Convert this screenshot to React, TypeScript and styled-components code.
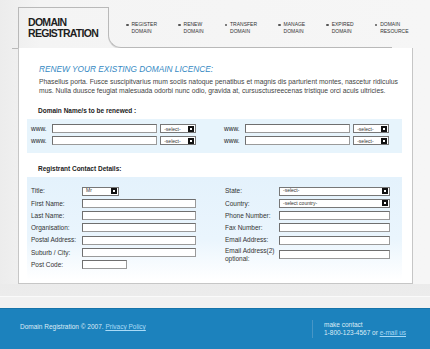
import React from "react";
import styled, { createGlobalStyle } from "styled-components";

const GlobalStyle = createGlobalStyle`
  * { box-sizing: border-box; }
  body {
    margin: 0;
    font-family: "Liberation Sans", Arial, sans-serif;
    color: #333;
  }
`;

const Page = styled.div`
  width: 430px;
  height: 349px;
  overflow: hidden;
  background: linear-gradient(to right, #ececec 0, #f4f4f4 40px, #f6f6f6 100%);
  display: flex;
  flex-direction: column;
`;

const Header = styled.header`
  display: flex;
  flex: none;
  height: 48px;
  padding: 7px 0 0 18px;
`;

const Brand = styled.div`
  width: 90px;
  border-top: 1px solid #b9b9b9;
  border-left: 1px solid #b9b9b9;
  padding: 9px 0 0 9px;
  font-size: 10.5px;
  line-height: 10.5px;
  font-weight: bold;
  letter-spacing: -0.7px;
  color: #1e1e1e;
`;

const Nav = styled.ul`
  list-style: none;
  margin: 0;
  width: 284px;
  border-left: 1px solid #b9b9b9;
  border-bottom: 1px solid #b9b9b9;
  border-bottom-left-radius: 13px;
  box-shadow: 0 1px 0 #dcdcdc;
  display: flex;
  gap: 21px;
  padding: 14px 0 0 17px;
`;

const NavItem = styled.li`
  display: flex;
  gap: 3px;
  font-size: 5px;
  line-height: 7px;
  color: #333;
  &::before {
    content: "";
    width: 2.5px;
    height: 2.5px;
    margin-top: 2.5px;
    border-radius: 50%;
    background: #555;
    flex: none;
  }
`;

const Panel = styled.main`
  position: relative;
  flex: none;
  margin-left: 18px;
  width: 395px;
  height: 236px;
  background: #fff;
  border: 1px solid #c6c6c6;
  border-top: none;
  padding-top: 16px;
  &::before {
    content: "";
    position: absolute;
    left: -7px;
    top: 0;
    width: 6px;
    height: 1px;
    background: #b9b9b9;
  }
`;

const Heading = styled.h1`
  margin: 0 0 0 20px;
  font-size: 8.3px;
  line-height: 10px;
  font-style: italic;
  font-weight: normal;
  color: #3589c3;
`;

const Intro = styled.p`
  margin: 3px 10px 0 20px;
  font-size: 6.8px;
  line-height: 9px;
  color: #444;
`;

const SectionTitle = styled.h2<{ $top: number }>`
  margin: ${(p) => p.$top}px 0 0 19px;
  font-size: 6.5px;
  line-height: 9px;
  font-weight: bold;
  color: #222;
`;

const BluePanel = styled.div<{ $fade?: boolean }>`
  margin: 4px 0 0 8px;
  width: 375px;
  background: ${(p) =>
    p.$fade
      ? "linear-gradient(to bottom, #e4f2fc 0, #eaf5fd 60%, #ffffff 100%)"
      : "#e7f4fc"};
`;

const DomainGrid = styled.div`
  display: grid;
  grid-template-columns: 165px 165px;
  column-gap: 28px;
  row-gap: 3px;
  padding: 5px 0 8px 4px;
`;

const DomainRow = styled.div`
  display: flex;
  align-items: center;
  height: 9px;
  font-size: 6.5px;
  color: #222;
`;

const Prefix = styled.span`
  width: 21px;
`;

const TextBox = styled.span<{ $w: number }>`
  display: block;
  width: ${(p) => p.$w}px;
  height: 9px;
  background: #fff;
  border: 1px solid #6f6f6f;
  border-right-color: #9a9a9a;
  border-bottom-color: #9a9a9a;
`;

const SelectBox = styled.span<{ $w: number }>`
  display: flex;
  align-items: center;
  justify-content: space-between;
  width: ${(p) => p.$w}px;
  height: 9px;
  margin-left: 3px;
  background: #fff;
  border: 1px solid #777;
  padding: 0 1px 0 3px;
  font-size: 5px;
  color: #333;
  &::after {
    content: "";
    width: 6px;
    height: 6px;
    background: #111
      linear-gradient(#fff, #fff) center / 2px 2px no-repeat;
  }
`;

const FormSelect = styled(SelectBox)`
  margin-left: 0;
`;

const ContactGrid = styled.div`
  display: grid;
  grid-template-columns: 165px 165px;
  column-gap: 29px;
  padding: 9px 0 10px 4px;
`;

const Column = styled.div`
  display: flex;
  flex-direction: column;
  gap: 2.3px;
`;

const Field = styled.div<{ $label: number }>`
  display: grid;
  grid-template-columns: ${(p) => p.$label}px auto;
  align-items: center;
  min-height: 10px;
  font-size: 6.5px;
  line-height: 7.5px;
  color: #333;
`;

const Band = styled.div`
  flex: none;
  height: 24px;
  background: linear-gradient(to bottom, #ebebeb 0, #ececec 12px, #fafafa 12px, #fafafa 13px, #f1f1f1 13px);
`;

const Footer = styled.footer`
  flex: none;
  height: 41px;
  background: #1c82bd;
  border-top: 1px solid #1674aa;
  display: flex;
  justify-content: space-between;
  align-items: center;
  padding: 0 0 5px 20px;
  font-size: 6.5px;
  color: #dcecf6;
`;

const Copy = styled.div`
  padding-top: 0;
`;

const FooterLink = styled.a`
  color: #a9dbf7;
  text-decoration: underline;
`;

const Contact = styled.div`
  width: 118px;
  border-left: 1px solid #4796c6;
  padding: 1px 0 1px 11px;
  line-height: 8px;
  margin-top: 4px;
`;

const leftFields = ["First Name:", "Last Name:", "Organisation:", "Postal Address:", "Suburb / City:"];

const rightInputs = ["Phone Number:", "Fax Number:", "Email Address:"];

const navItems = [
  ["REGISTER", "DOMAIN"],
  ["RENEW", "DOMAIN"],
  ["TRANSFER", "DOMAIN"],
  ["MANAGE", "DOMAIN"],
  ["EXPIRED", "DOMAIN"],
  ["DOMAIN", "RESOURCE"],
];

const App = () => {
  return (
    <>
      <GlobalStyle />
      <Page>
        <Header>
          <Brand>
            DOMAIN
            <br />
            REGISTRATION
          </Brand>
          <Nav>
            {navItems.map(([a, b]) => (
              <NavItem key={a + b}>
                <span>
                  {a}
                  <br />
                  {b}
                </span>
              </NavItem>
            ))}
          </Nav>
        </Header>
        <Panel>
          <Heading>RENEW YOUR EXISTING DOMAIN LICENCE:</Heading>
          <Intro>
            Phasellus porta. Fusce suscipitvarius mum sociis natoque penatibus et magnis dis
            parturient montes, nascetur ridiculus mus. Nulla duusce feugiat malesuada odorbi nunc
            odio, gravida at, cursusctusreecenas tristique orci aculs ultricies.
          </Intro>
          <SectionTitle $top={11}>Domain Name/s to be renewed :</SectionTitle>
          <BluePanel>
            <DomainGrid>
              {[0, 1, 2, 3].map((i) => (
                <DomainRow key={i}>
                  <Prefix>www.</Prefix>
                  <TextBox $w={106} />
                  <SelectBox $w={36}>-select-</SelectBox>
                </DomainRow>
              ))}
            </DomainGrid>
          </BluePanel>
          <SectionTitle $top={11}>Registrant Contact Details:</SectionTitle>
          <BluePanel $fade>
            <ContactGrid>
              <Column>
                <Field $label={51}>
                  <span>Title:</span>
                  <FormSelect $w={37}>Mr</FormSelect>
                </Field>
                {leftFields.map((l) => (
                  <Field $label={51} key={l}>
                    <span>{l}</span>
                    <TextBox $w={114} />
                  </Field>
                ))}
                <Field $label={51}>
                  <span>Post Code:</span>
                  <TextBox $w={45} />
                </Field>
              </Column>
              <Column>
                <Field $label={54}>
                  <span>State:</span>
                  <FormSelect $w={111}>-select-</FormSelect>
                </Field>
                <Field $label={54}>
                  <span>Country:</span>
                  <FormSelect $w={111}>-select country-</FormSelect>
                </Field>
                {rightInputs.map((l) => (
                  <Field $label={54} key={l}>
                    <span>{l}</span>
                    <TextBox $w={111} />
                  </Field>
                ))}
                <Field $label={54}>
                  <span>
                    Email Address(2)
                    <br />
                    optional:
                  </span>
                  <TextBox $w={111} />
                </Field>
              </Column>
            </ContactGrid>
          </BluePanel>
        </Panel>
        <Band />
        <Footer>
          <Copy>
            Domain Registration © 2007. <FooterLink href="#">Privacy Policy</FooterLink>
          </Copy>
          <Contact>
            make contact
            <br />
            1-800-123-4567 or <FooterLink href="#">e-mail us</FooterLink>
          </Contact>
        </Footer>
      </Page>
    </>
  );
};

export default App;
